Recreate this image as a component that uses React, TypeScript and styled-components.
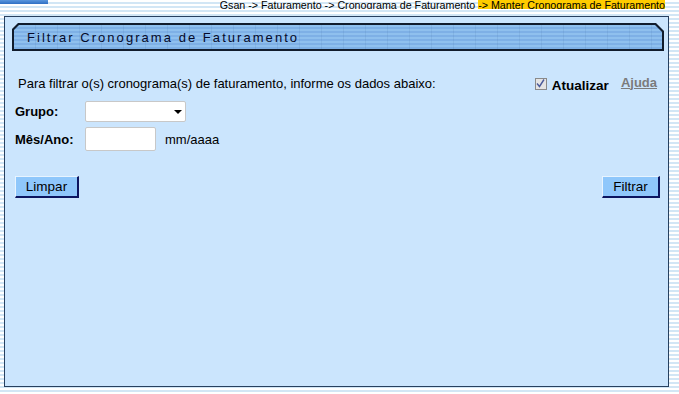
import React from "react";
import styled, { createGlobalStyle } from "styled-components";

const Global = createGlobalStyle`
  html, body { margin: 0; padding: 0; }
  body {
    width: 679px;
    height: 394px;
    overflow: hidden;
    font-family: "Liberation Sans", Arial, sans-serif;
    background: repeating-linear-gradient(
      to bottom,
      #ffffff 0px, #ffffff 2px,
      #d2e6f5 2px, #d2e6f5 4px
    );
  }
`;

const Page = styled.div`
  width: 679px;
  height: 394px;
  display: flex;
  flex-direction: column;
`;

const TopStrip = styled.div`
  height: 16px;
  display: flex;
  align-items: flex-start;
  justify-content: space-between;
  padding-right: 14px;
`;

const BlueTab = styled.div`
  width: 48px;
  height: 4px;
  background: linear-gradient(to bottom, #5b97de, #2f6fc4);
`;

const Crumbs = styled.div`
  height: 9px;
  overflow: hidden;
  display: flex;
  font-size: 10.7px;
  line-height: 11px;
  color: #000;
`;

const CrumbText = styled.span<{ $hl?: boolean }>`
  display: block;
  margin-top: -3px;
  padding-top: 3px;
  background: ${(p) => (p.$hl ? "#ffcc00" : "transparent")};
  white-space: pre;
`;

const Panel = styled.div`
  margin-left: 4px;
  width: 665px;
  height: 371px;
  box-sizing: border-box;
  border: 1px solid #27405f;
  background: #cbe5fd;
  padding: 6px 4px 0 7px;
  display: flex;
  flex-direction: column;
`;

const HeaderOuter = styled.div`
  width: 652px;
  height: 28px;
  background: #111c2c;
  clip-path: polygon(6px 0, calc(100% - 8px) 0, 100% 8px, 100% 100%, 0 100%, 0 6px);
  padding: 2px;
  box-sizing: border-box;
`;

const HeaderInner = styled.div`
  height: 100%;
  clip-path: polygon(5px 0, calc(100% - 7px) 0, 100% 7px, 100% 100%, 0 100%, 0 5px);
  background:
    repeating-linear-gradient(to right, transparent 0px, transparent 21px, rgba(60,100,150,0.12) 21px, rgba(60,100,150,0.12) 22px),
    repeating-linear-gradient(to bottom, #8fc0ee 0px, #8fc0ee 2px, #7eb0e6 2px, #7eb0e6 4px);
  display: flex;
  align-items: center;
  padding-left: 13px;
`;

const Title = styled.span`
  font-size: 13px;
  letter-spacing: 2.05px;
  color: #050a2a;
`;

const Intro = styled.div`
  margin-top: 24px;
  display: flex;
  align-items: center;
  justify-content: space-between;
  padding-left: 6px;
  padding-right: 7px;
  height: 16px;
`;

const IntroText = styled.span`
  font-size: 13px;
  color: #000;
`;

const Tools = styled.div`
  display: flex;
  align-items: center;
`;

const CheckBox = styled.span`
  width: 10px;
  height: 10px;
  border: 1px solid #8a8a8a;
  background: #e4e4e4;
  display: inline-flex;
  align-items: center;
  justify-content: center;
  margin-right: 5px;
  margin-top: 1px;
`;

const CheckLabel = styled.span`
  font-size: 13.5px;
  font-weight: bold;
  color: #000;
  margin-top: 4px;
`;

const Help = styled.a`
  margin-left: 12px;
  font-size: 13px;
  font-weight: bold;
  color: #7b7b7b;
  text-decoration: underline;
  margin-top: -2px;
`;

const Form = styled.div`
  margin-top: 10px;
  display: flex;
  flex-direction: column;
  gap: 5px;
  padding-left: 3px;
`;

const Row = styled.div`
  display: flex;
  align-items: center;
`;

const Label = styled.span`
  width: 70px;
  font-size: 13px;
  font-weight: bold;
  color: #000;
`;

const Select = styled.div`
  width: 101px;
  height: 21px;
  box-sizing: border-box;
  background: #fff;
  border: 1px solid #c8c8c8;
  border-radius: 2px;
  display: flex;
  align-items: center;
  justify-content: flex-end;
  padding-right: 3px;
`;

const Input = styled.div`
  width: 71px;
  height: 24px;
  box-sizing: border-box;
  background: #fff;
  border: 1px solid #c8c8c8;
  border-radius: 2px;
`;

const Hint = styled.span`
  margin-left: 9px;
  font-size: 13px;
  color: #000;
`;

const Buttons = styled.div`
  margin-top: 25px;
  display: flex;
  justify-content: space-between;
  padding-left: 3px;
  padding-right: 4px;
`;

const Button = styled.button<{ $w: number }>`
  width: ${(p) => p.$w}px;
  height: 22px;
  box-sizing: border-box;
  background: #8fc7fb;
  border-style: solid;
  border-width: 1px 2px 2px 1px;
  border-color: #e8f4ff #0c1560 #0c1560 #e8f4ff;
  font-family: "Liberation Sans", Arial, sans-serif;
  font-size: 13.5px;
  color: #000;
  padding: 0;
`;

export default function App() {
  return (
    <>
      <Global />
      <Page>
        <TopStrip>
          <BlueTab />
          <Crumbs>
            <CrumbText>Gsan -&gt; Faturamento -&gt; Cronograma de Faturamento </CrumbText>
            <CrumbText $hl>-&gt; Manter Cronograma de Faturamento</CrumbText>
          </Crumbs>
        </TopStrip>
        <Panel>
          <HeaderOuter>
            <HeaderInner>
              <Title>Filtrar Cronograma de Faturamento</Title>
            </HeaderInner>
          </HeaderOuter>
          <Intro>
            <IntroText>Para filtrar o(s) cronograma(s) de faturamento, informe os dados abaixo:</IntroText>
            <Tools>
              <CheckBox>
                <svg width="9" height="9" viewBox="0 0 9 9">
                  <path d="M1 4.5 L3.5 7.5 L8 0.5" fill="none" stroke="#4a5a9a" strokeWidth="1.4" />
                </svg>
              </CheckBox>
              <CheckLabel>Atualizar</CheckLabel>
              <Help>Ajuda</Help>
            </Tools>
          </Intro>
          <Form>
            <Row>
              <Label>Grupo:</Label>
              <Select>
                <svg width="8" height="4" viewBox="0 0 8 4">
                  <path d="M0 0 L8 0 L4 4 Z" fill="#000" />
                </svg>
              </Select>
            </Row>
            <Row>
              <Label>Mês/Ano:</Label>
              <Input />
              <Hint>mm/aaaa</Hint>
            </Row>
          </Form>
          <Buttons>
            <Button $w={64}>Limpar</Button>
            <Button $w={58}>Filtrar</Button>
          </Buttons>
        </Panel>
      </Page>
    </>
  );
}
